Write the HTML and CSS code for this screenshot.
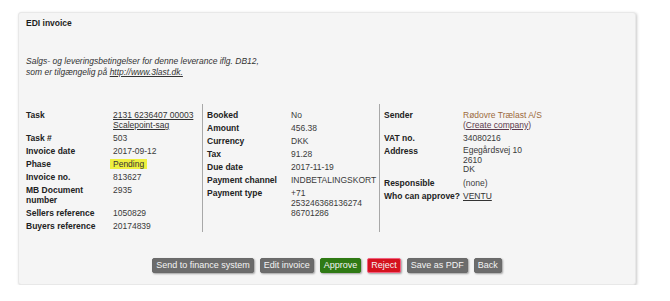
FILE: index.html
```html
<!DOCTYPE html>
<html>
<head>
<meta charset="utf-8">
<link rel="stylesheet" href="styles.css">
</head>
<body>
<div class="card">
  <div class="title">EDI invoice</div>
  <div class="terms">Salgs- og leveringsbetingelser for denne leverance iflg. DB12,<br>som er tilgængelig på <a href="#">http://www.3last.dk.</a></div>
  <div class="details">
    <div class="col col1">
      <div class="lbl">Task</div><div class="val"><a href="#">2131 6236407 00003</a><br><a href="#">Scalepoint-sag</a></div>
      <div class="lbl">Task #</div><div class="val">503</div>
      <div class="lbl">Invoice date</div><div class="val">2017-09-12</div>
      <div class="lbl">Phase</div><div class="val"><span class="badge">Pending</span></div>
      <div class="lbl">Invoice no.</div><div class="val">813627</div>
      <div class="lbl">MB Document number</div><div class="val">2935</div>
      <div class="lbl">Sellers reference</div><div class="val">1050829</div>
      <div class="lbl">Buyers reference</div><div class="val">20174839</div>
    </div>
    <div class="col col2">
      <div class="lbl">Booked</div><div class="val">No</div>
      <div class="lbl">Amount</div><div class="val">456.38</div>
      <div class="lbl">Currency</div><div class="val">DKK</div>
      <div class="lbl">Tax</div><div class="val">91.28</div>
      <div class="lbl">Due date</div><div class="val">2017-11-19</div>
      <div class="lbl">Payment channel</div><div class="val">INDBETALINGSKORT</div>
      <div class="lbl">Payment type</div><div class="val">+71<br>253246368136274<br>86701286</div>
    </div>
    <div class="col col3">
      <div class="lbl">Sender</div><div class="val"><span class="sender">Rødovre Trælast A/S</span><br><span class="create">(<a href="#">Create company</a>)</span></div>
      <div class="lbl">VAT no.</div><div class="val">34080216</div>
      <div class="lbl">Address</div><div class="val addr">Egegårdsvej 10<br>2610<br>DK</div>
      <div class="lbl">Responsible</div><div class="val">(none)</div>
      <div class="lbl">Who can approve?</div><div class="val"><a href="#">VENTU</a></div>
    </div>
  </div>
  <div class="buttons">
    <button class="btn">Send to finance system</button>
    <button class="btn">Edit invoice</button>
    <button class="btn green">Approve</button>
    <button class="btn red">Reject</button>
    <button class="btn">Save as PDF</button>
    <button class="btn">Back</button>
  </div>
</div>
</body>
</html>
```
FILE: styles.css
```css
html, body {
  margin: 0;
  padding: 0;
  background: #ffffff;
}
body {
  font-family: "Liberation Sans", Arial, sans-serif;
  font-size: 8.5px;
  color: #333;
}
.card {
  margin: 12px 0 0 18px;
  width: 618px;
  height: 273px;
  box-sizing: border-box;
  padding: 4px 7px 0 7px;
  background: #f5f5f5;
  border: 1px solid #e8e8e8;
  border-radius: 3px;
  box-shadow: 1px 1px 3px rgba(0,0,0,0.22);
}
.title {
  font-weight: bold;
  color: #1e1e1e;
  line-height: 12px;
}
.terms {
  margin-top: 27px;
  font-style: italic;
  line-height: 11px;
  color: #333;
}
.terms a { color: #333; }
a { color: #333; text-decoration: underline; }
.details {
  margin-top: 26px;
  display: flex;
  align-items: stretch;
}
.col {
  display: grid;
  row-gap: 3px;
  align-content: start;
  padding: 6px 0 1px 0;
  line-height: 10px;
}
.col1 {
  width: 176px;
  grid-template-columns: 87px 1fr;
}
.col2 {
  width: 172px;
  border-left: 1px solid #a8a8a8;
  padding-left: 4px;
  grid-template-columns: 84px 1fr;
}
.col3 {
  border-left: 1px solid #a8a8a8;
  padding-left: 4px;
  grid-template-columns: 79px 1fr;
}
.lbl {
  font-weight: bold;
  color: #222;
}
.val { color: #3a3a3a; }
.addr { line-height: 9.5px; }
.badge {
  background: #eef040;
  padding: 0 3px;
  margin-left: -3px;
  color: #333;
}
.sender { color: #9c6b3c; }
.create, .create a { color: #5c3a4c; }
.buttons {
  margin-top: 26px;
  display: flex;
  justify-content: center;
  gap: 6px;
}
.btn {
  font-family: "Liberation Sans", Arial, sans-serif;
  font-size: 9px;
  height: 15px;
  line-height: 13px;
  padding: 0 3px;
  border: 1px solid #6a6a6a;
  border-radius: 2px;
  background: #6c6c6c;
  color: #f4f4f4;
  box-shadow: 1px 1px 2px rgba(0,0,0,0.35);
}
.green {
  background: #2f7a14;
  border-color: #2f7a14;
}
.red {
  background: #d5121e;
  border-color: #f06080;
}
```
